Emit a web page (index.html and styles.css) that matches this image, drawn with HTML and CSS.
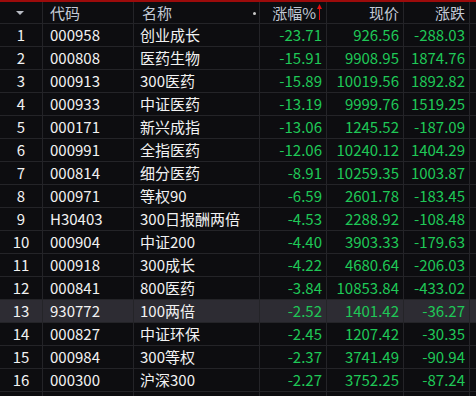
FILE: index.html
```html
<!DOCTYPE html>
<html lang="zh">
<head>
<meta charset="utf-8">
<link rel="stylesheet" href="styles.css">
</head>
<body>
<div class="topbar"></div>
<div class="grid">
  <div class="row head">
    <div class="c idx"><span class="tri"></span></div>
    <div class="c code">代码</div>
    <div class="c name"><span>名称</span><span class="dot"></span></div>
    <div class="c num">涨幅%<svg class="arrow" width="5" height="16" viewBox="0 0 5 16"><path d="M2.5 0 L5 5 L0 5 Z" fill="#e01010"/><rect x="2" y="4" width="1" height="12" fill="#e01010"/></svg></div>
    <div class="c num">现价</div>
    <div class="c num">涨跌</div>
    <div class="c"></div>
  </div>
  <div class="row"><div class="c idx">1</div><div class="c code">000958</div><div class="c name">创业成长</div><div class="c num g">-23.71</div><div class="c num g">926.56</div><div class="c num g">-288.03</div><div class="c"></div></div>
  <div class="row"><div class="c idx">2</div><div class="c code">000808</div><div class="c name">医药生物</div><div class="c num g">-15.91</div><div class="c num g">9908.95</div><div class="c num g">1874.76</div><div class="c"></div></div>
  <div class="row"><div class="c idx">3</div><div class="c code">000913</div><div class="c name">300医药</div><div class="c num g">-15.89</div><div class="c num g">10019.56</div><div class="c num g">1892.82</div><div class="c"></div></div>
  <div class="row"><div class="c idx">4</div><div class="c code">000933</div><div class="c name">中证医药</div><div class="c num g">-13.19</div><div class="c num g">9999.76</div><div class="c num g">1519.25</div><div class="c"></div></div>
  <div class="row"><div class="c idx">5</div><div class="c code">000171</div><div class="c name">新兴成指</div><div class="c num g">-13.06</div><div class="c num g">1245.52</div><div class="c num g">-187.09</div><div class="c"></div></div>
  <div class="row"><div class="c idx">6</div><div class="c code">000991</div><div class="c name">全指医药</div><div class="c num g">-12.06</div><div class="c num g">10240.12</div><div class="c num g">1404.29</div><div class="c"></div></div>
  <div class="row"><div class="c idx">7</div><div class="c code">000814</div><div class="c name">细分医药</div><div class="c num g">-8.91</div><div class="c num g">10259.35</div><div class="c num g">1003.87</div><div class="c"></div></div>
  <div class="row"><div class="c idx">8</div><div class="c code">000971</div><div class="c name">等权90</div><div class="c num g">-6.59</div><div class="c num g">2601.78</div><div class="c num g">-183.45</div><div class="c"></div></div>
  <div class="row"><div class="c idx">9</div><div class="c code">H30403</div><div class="c name">300日报酬两倍</div><div class="c num g">-4.53</div><div class="c num g">2288.92</div><div class="c num g">-108.48</div><div class="c"></div></div>
  <div class="row"><div class="c idx">10</div><div class="c code">000904</div><div class="c name">中证200</div><div class="c num g">-4.40</div><div class="c num g">3903.33</div><div class="c num g">-179.63</div><div class="c"></div></div>
  <div class="row"><div class="c idx">11</div><div class="c code">000918</div><div class="c name">300成长</div><div class="c num g">-4.22</div><div class="c num g">4680.64</div><div class="c num g">-206.03</div><div class="c"></div></div>
  <div class="row"><div class="c idx">12</div><div class="c code">000841</div><div class="c name">800医药</div><div class="c num g">-3.84</div><div class="c num g">10853.84</div><div class="c num g">-433.02</div><div class="c"></div></div>
  <div class="row sel"><div class="c idx">13</div><div class="c code">930772</div><div class="c name">100两倍</div><div class="c num g">-2.52</div><div class="c num g">1401.42</div><div class="c num g">-36.27</div><div class="c"></div></div>
  <div class="row"><div class="c idx">14</div><div class="c code">000827</div><div class="c name">中证环保</div><div class="c num g">-2.45</div><div class="c num g">1207.42</div><div class="c num g">-30.35</div><div class="c"></div></div>
  <div class="row"><div class="c idx">15</div><div class="c code">000984</div><div class="c name">300等权</div><div class="c num g">-2.37</div><div class="c num g">3741.49</div><div class="c num g">-90.94</div><div class="c"></div></div>
  <div class="row"><div class="c idx">16</div><div class="c code">000300</div><div class="c name">沪深300</div><div class="c num g">-2.27</div><div class="c num g">3752.25</div><div class="c num g">-87.24</div><div class="c"></div></div>
  <div class="row"><div class="c idx"></div><div class="c code"></div><div class="c name"></div><div class="c num"></div><div class="c num"></div><div class="c num"></div><div class="c"></div></div>
</div>
</body>
</html>
```
FILE: styles.css
```css
html, body {
  margin: 0;
  padding: 0;
  background: #0d0d10;
  overflow: hidden;
}
body {
  width: 476px;
  height: 396px;
  font-family: "Noto Sans CJK SC", "Noto Sans", sans-serif;
  font-size: 15px;
  color: #f2f2f2;
}
.topbar {
  height: 2px;
  background: #9c0b0b;
}
.grid {
  display: flex;
  flex-direction: column;
  gap: 1px;
  background: #242428;
}
.row {
  display: grid;
  grid-template-columns: 42px 90px 125px 66px 76px 65px 6px;
  column-gap: 1px;
  height: 22px;
}
.row.head {
  height: 21px;
}
.c {
  background: #0d0d10;
  display: flex;
  align-items: center;
  white-space: nowrap;
  overflow: hidden;
  line-height: 22px;
}
.sel .c {
  background: #2d2c33;
}
.head .c {
  color: #c3cad6;
}
.idx {
  justify-content: center;
}
.code {
  padding-left: 7px;
}
.name {
  padding-left: 6px;
}
.head .name {
  padding-left: 8px;
  position: relative;
}
.num {
  justify-content: flex-end;
  padding-right: 4px;
}
.g {
  color: #1fc857;
}
.tri {
  width: 0;
  height: 0;
  border-left: 4px solid transparent;
  border-right: 4px solid transparent;
  border-top: 4px solid #b8bcc4;
  margin-left: -2px;
}
.dot {
  position: absolute;
  right: 3px;
  top: 10px;
  width: 3px;
  height: 3px;
  border-radius: 50%;
  background: #c8c8c8;
}
.arrow {
  margin-left: 1px;
  margin-bottom: 1px;
}
```
